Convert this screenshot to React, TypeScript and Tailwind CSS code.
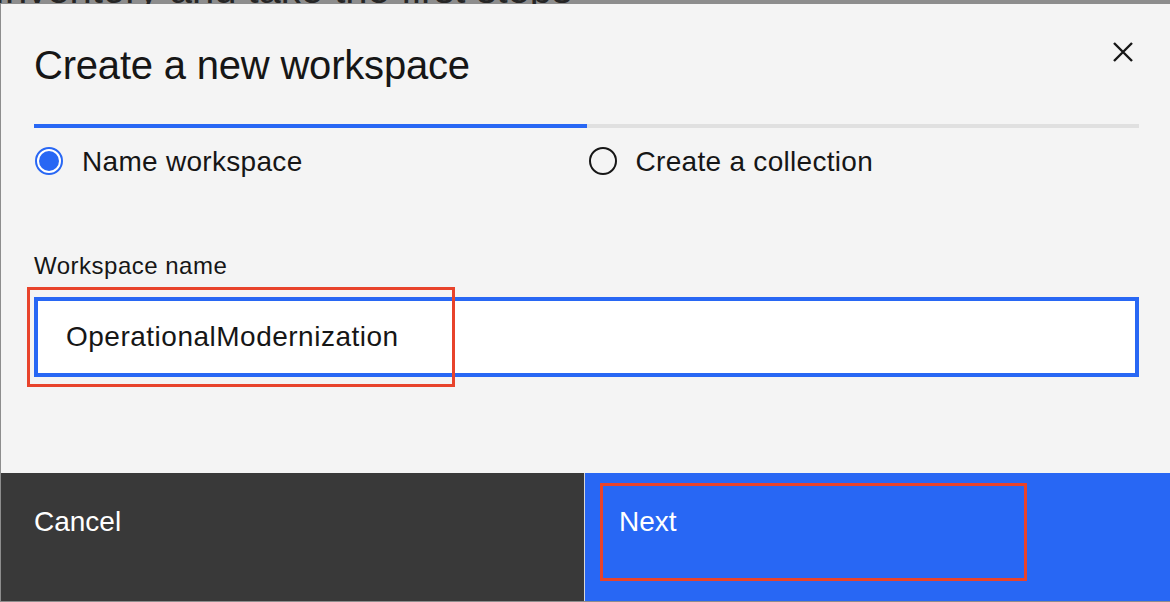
import React from "react";

function RadioChecked() {
  return (
    <span className="w-[28px] h-[28px] rounded-full border-[2px] border-[#2867f4] bg-white flex items-center justify-center shrink-0">
      <span className="w-[20px] h-[20px] rounded-full bg-[#2867f4]" />
    </span>
  );
}

function RadioEmpty() {
  return <span className="w-[28px] h-[28px] rounded-full border-[2px] border-[#161616] shrink-0" />;
}

export default function App() {
  return (
    <div className="w-[1170px] h-[602px] flex flex-col bg-[#8d8d8d] overflow-hidden font-['Liberation_Sans',Arial,sans-serif]">
      <div className="h-[4px] overflow-hidden shrink-0">
        <div className="mt-[-35px] ml-[-6px] text-[40px] leading-[48px] text-[#262626] whitespace-nowrap">
          Inventory and take the first steps
        </div>
      </div>
      <div className="flex-1 flex pl-[1px] pb-[1px] min-h-0">
        <div className="flex-1 bg-[#f4f4f4] flex flex-col">
          <div className="pl-[33px] pr-[31px] pt-[37px]">
            <div className="flex items-start justify-between">
              <h1 className="text-[40px] leading-[48px] tracking-[-0.2px] text-[#161616]">Create a new workspace</h1>
              <svg width="20" height="20" viewBox="0 0 20 20" className="mt-[1px] mr-[6px]" aria-label="Close">
                <path d="M1 1 L19 19 M19 1 L1 19" stroke="#161616" strokeWidth="2.4" fill="none" />
              </svg>
            </div>
            <div className="mt-[35px] flex">
              <div className="flex-1 h-[4px] bg-[#2867f4]" />
              <div className="flex-1 h-[4px] bg-[#e0e0e0]" />
            </div>
            <div className="mt-[16px] grid grid-cols-2">
              <div className="flex items-center gap-[19px] pl-[1px]">
                <RadioChecked />
                <span className="text-[28px] leading-[34px] tracking-[0.3px] text-[#161616] translate-y-[1px]">Name workspace</span>
              </div>
              <div className="flex items-center gap-[19px] pl-[2px]">
                <RadioEmpty />
                <span className="text-[28px] leading-[34px] tracking-[0.3px] text-[#161616] translate-y-[1px]">Create a collection</span>
              </div>
            </div>
            <div className="mt-[74px] text-[24px] leading-[28px] tracking-[0.5px] text-[#161616]">Workspace name</div>
            <div className="relative mt-[17px]">
              <div className="h-[80px] border-[4px] border-[#2867f4] bg-white pl-[28px] flex items-center text-[28px] tracking-[0.5px] text-[#161616]">
                OperationalModernization
              </div>
              <div className="absolute left-[-7px] top-[-10px] w-[428px] h-[100px] border-[3px] border-[#e8432b]" />
            </div>
          </div>
          <div className="mt-auto h-[128px] flex">
            <div className="w-[583px] bg-[#393939] pl-[33px] pt-[32px] text-white text-[28px] leading-[34px]">Cancel</div>
            <div className="w-[1px] bg-[#d6d6d6]" />
            <div className="relative flex-1 bg-[#2867f4] pl-[34px] pt-[32px] text-white text-[28px] leading-[34px]">
              Next
              <div className="absolute left-[15px] top-[10px] w-[427px] h-[98px] border-[3px] border-[#e8432b]" />
            </div>
          </div>
        </div>
      </div>
    </div>
  );
}
